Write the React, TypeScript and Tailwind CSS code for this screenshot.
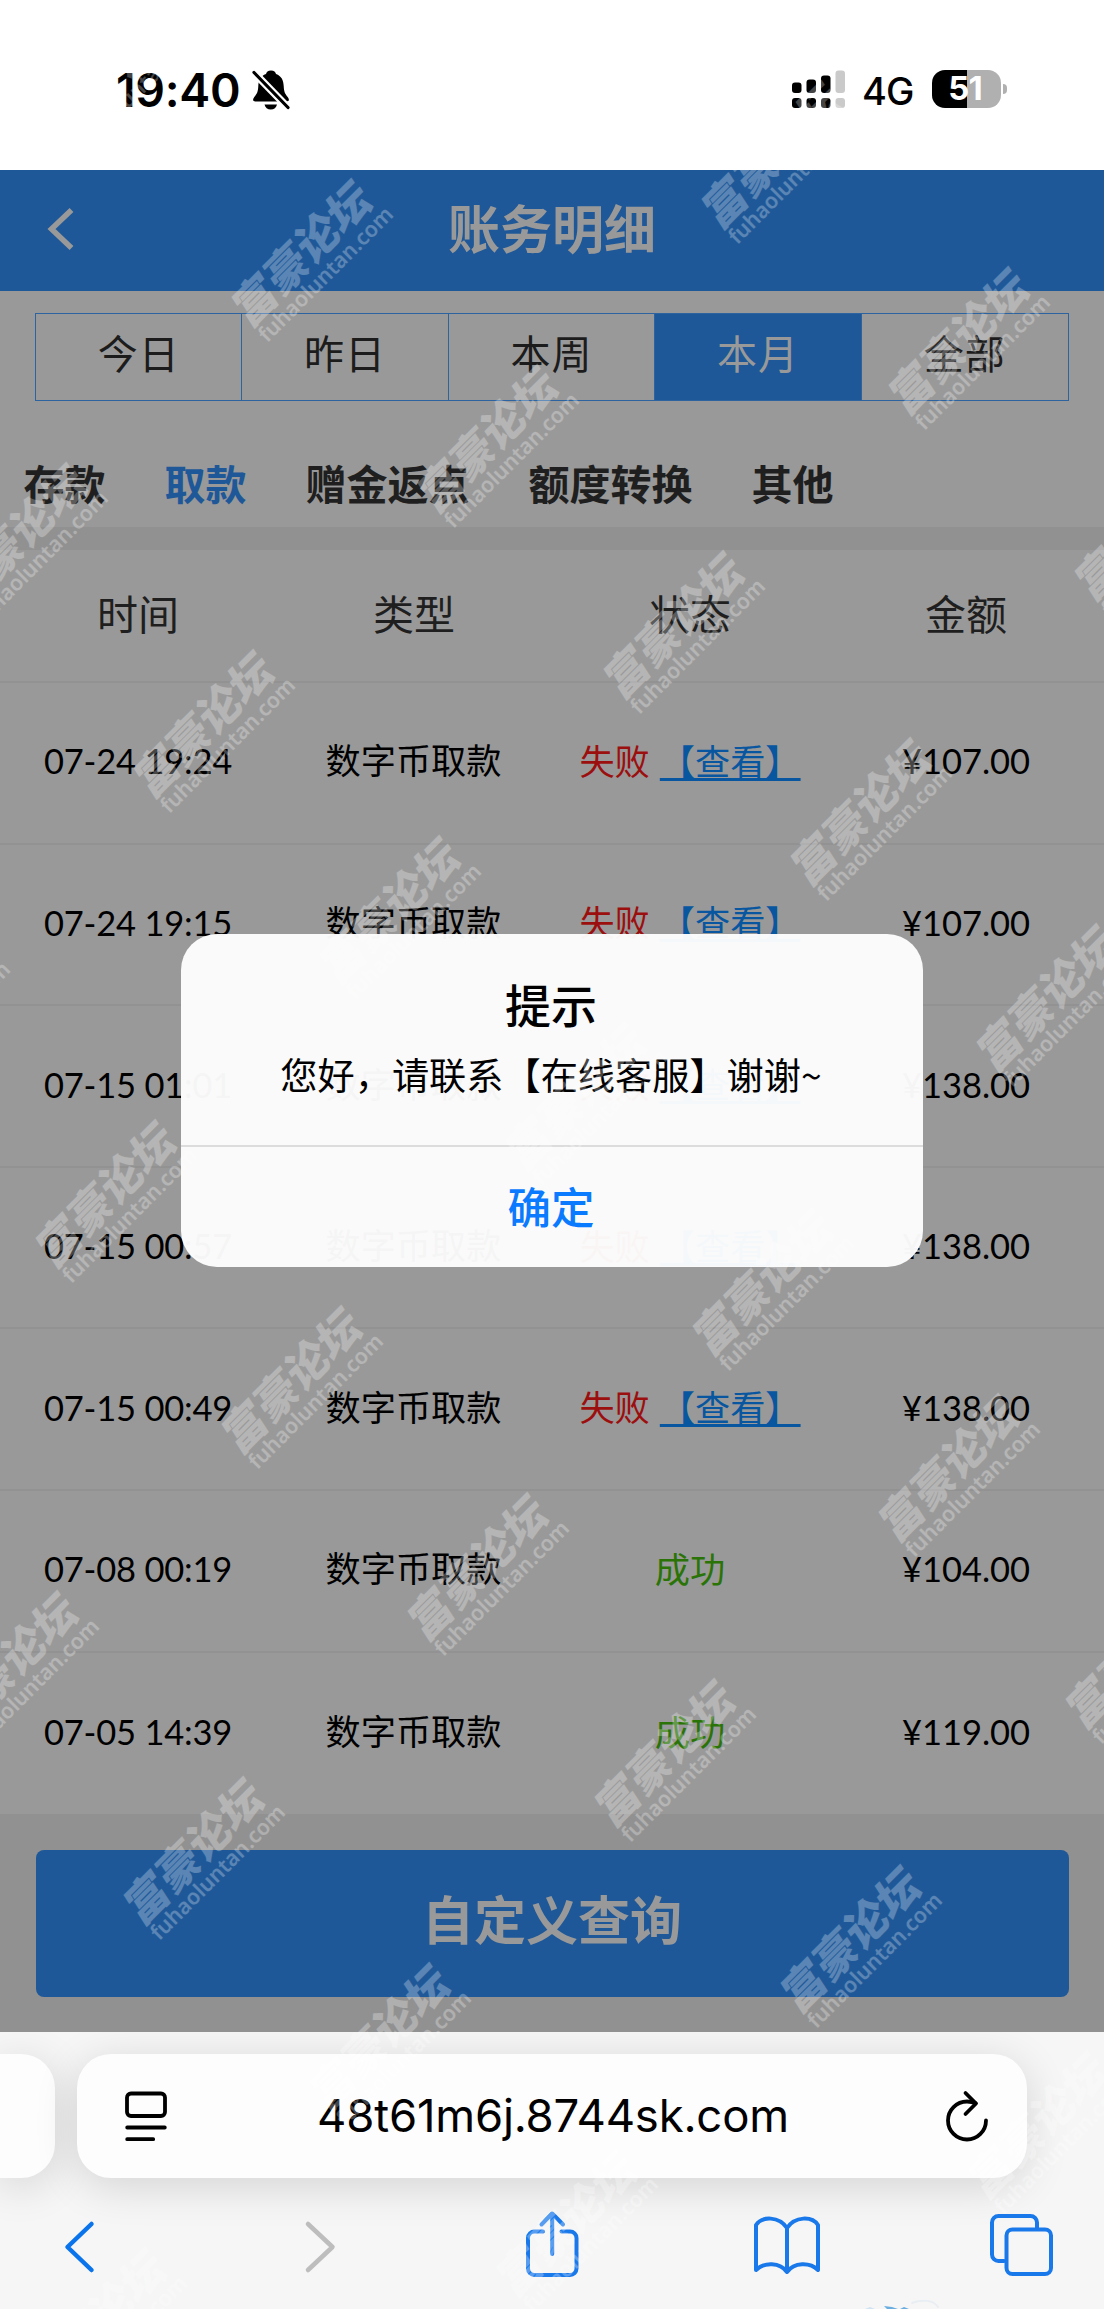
import React from "react";

const CJK = "font-['Noto_Sans_CJK_SC',sans-serif]";

const rows = [
  { time: "07-24 19:24", ok: false, amount: "¥107.00" },
  { time: "07-24 19:15", ok: false, amount: "¥107.00" },
  { time: "07-15 01:01", ok: false, amount: "¥138.00" },
  { time: "07-15 00:57", ok: false, amount: "¥138.00" },
  { time: "07-15 00:49", ok: false, amount: "¥138.00" },
  { time: "07-08 00:19", ok: true, amount: "¥104.00" },
  { time: "07-05 14:39", ok: true, amount: "¥119.00" },
];

function StatusBar() {
  return (
    <div className="flex h-[170px] items-start bg-white pt-[70px] font-[Inter,sans-serif] text-black">
      <div className="ml-[116px] h-[38px] w-[125px] text-[46.500px] leading-[40px] font-semibold tracking-[-0.3px] whitespace-nowrap">
        19:40
      </div>
      <svg className="ml-[11px] h-[40px] w-[38px]" viewBox="0 0 38 40">
        <path
          d="M19 0.5c-3 0-4.7 1.8-5 3.600C8.500 6 6.500 10.500 6.300 16c-.2 6-1.500 8-4 11C.5 29.400.600 31.500 3.500 31.500h31c2.900 0 3-2.100 1.200-4.500-2.500-3-3.800-5-4-11C31.500 10.500 29.500 6 24 4.100 23.700 2.300 22 .5 19 .5zM12.500 34.500h12.500c-.6 3-3 5-6.200 5s-5.700-2-6.300-5z"
          fill="#000"
        />
        <path d="M1.500 2l35 36" stroke="#fff" strokeWidth="7.500" />
        <path d="M2 2.500l34 35" stroke="#000" strokeWidth="3.200" strokeLinecap="round" />
      </svg>
      <svg className="ml-[502px] h-[38px] w-[54px]" viewBox="0 0 54 38">
        <g fill="#000">
          <rect x="0" y="12.500" width="9.500" height="10.500" rx="3" />
          <rect x="14.500" y="9.500" width="9.500" height="13.500" rx="3" />
          <rect x="29" y="5.500" width="9.500" height="17.500" rx="3" />
          <rect x="0" y="28" width="9.500" height="10" rx="3" />
          <rect x="14.500" y="28" width="9.500" height="10" rx="3" />
          <rect x="29" y="28" width="9.500" height="10" rx="3" />
        </g>
        <g fill="#cacaca">
          <rect x="43.500" y="0.500" width="9.500" height="22.500" rx="3" />
          <rect x="43.500" y="28" width="9.500" height="10" rx="3" />
        </g>
      </svg>
      <div className="ml-[16px] w-[52px] text-[38px] leading-[43px] font-medium tracking-[-1px]">4G</div>
      <div className="ml-[18px] flex h-[38px] w-[69px] items-center justify-center rounded-[13px] bg-[linear-gradient(90deg,#000_51%,#b0b0b0_51%)] pr-[3px] text-[33px] font-bold tracking-[-1px] text-white">
        51
      </div>
      <div className="mt-[14px] ml-[2px] h-[10px] w-[4px] rounded-r-full bg-[#b0b0b0]" />
    </div>
  );
}

function PageHeader() {
  return (
    <div className="relative flex h-[121px] items-center justify-center bg-[#1e5898] pb-[8px]">
      <svg className="absolute top-[37px] left-[47px] h-[44px] w-[28px]" viewBox="0 0 28 44" fill="none">
        <path d="M24.500 3L4.500 22l20 19" stroke="#999" strokeWidth="5.500" />
      </svg>
      <h1 className="text-[52px] leading-[60px] font-bold text-[#999]">账务明细</h1>
    </div>
  );
}

function RangeTabs() {
  const items = ["今日", "昨日", "本周", "本月", "全部"];
  return (
    <div className="mx-[35px] mt-[22px] grid h-[88px] grid-cols-5 border border-[#2d64a0]">
      {items.map((t, i) => (
        <div
          key={t}
          className={
            "flex items-center justify-center pb-[10px] text-[40px] tracking-[1px] " +
            (i === 3 ? "bg-[#1e5898] text-[#999]" : "text-[#1c1c1c]") +
            (i < 4 ? " border-r border-[#2d64a0]" : "")
          }
        >
          {t}
        </div>
      ))}
    </div>
  );
}

function TypeTabs() {
  const items = ["存款", "取款", "赠金返点", "额度转换", "其他"];
  return (
    <div className="flex h-[126px] items-center gap-[59px] pt-[35px] pl-[23.500px] text-[41px] leading-[50px] font-bold text-[#1f1f1f]">
      {items.map((t, i) => (
        <span key={t} className={i === 1 ? "text-[#1e5898]" : ""}>
          {t}
        </span>
      ))}
    </div>
  );
}

function RecordTable() {
  return (
    <div>
      <div className="grid h-[133px] grid-cols-4 items-center border-b-2 border-[#929292] pb-[5px] text-center text-[41px] text-[#1f1f1f]">
        <span>时间</span>
        <span>类型</span>
        <span>状态</span>
        <span>金额</span>
      </div>
      {rows.map((r, i) => (
        <div
          key={r.time}
          className={
            "grid h-[161.600px] grid-cols-4 items-center pb-[3px] text-center text-[35.200px] whitespace-nowrap text-black" +
            (i < rows.length - 1 ? " border-b-2 border-[#929292]" : "")
          }
        >
          <span className="font-[Lato,sans-serif] text-[34.500px] tracking-[-0.2px]">{r.time}</span>
          <span className="pr-[1px] pb-[3px]">数字币取款</span>
          {r.ok ? (
            <span className="pb-[1px] text-[#2a7306]">成功</span>
          ) : (
            <span className="flex items-center justify-center gap-[10px] pb-[2px] text-[#9c0f0f]">
              失败
              <a className="text-[#07569f] underline decoration-[3px] underline-offset-[3px] [text-decoration-skip-ink:none]">
                【查看】
              </a>
            </span>
          )}
          <span className="font-[Lato,sans-serif] text-[34.500px] tracking-[0px]">{r.amount}</span>
        </div>
      ))}
    </div>
  );
}

function Dialog() {
  return (
    <div className="absolute top-[934px] left-[181px] flex h-[333px] w-[742px] flex-col rounded-[36px] bg-[#fdfdfd]/97 text-center text-black">
      <div className="flex h-[213px] flex-col items-center border-b-2 border-[#dcdcdc] pt-[39px]">
        <div className="pr-[2px] text-[46px] leading-[60px] font-medium">提示</div>
        <div className="mt-[14px] pr-[2px] text-[37.200px] leading-[54px] whitespace-nowrap">您好，请联系【在线客服】谢谢~</div>
      </div>
      <div className="flex flex-1 items-center justify-center pr-[2px] pb-[3px] text-[43.500px] font-medium text-[#0a7aff]">确定</div>
    </div>
  );
}

function BrowserBar() {
  return (
    <div className="h-[277px] overflow-hidden bg-[#f6f6f6] pt-[22px]">
      <div className="flex gap-[22px]">
        <div className="h-[124px] w-[55px] rounded-r-[34px] bg-[#fdfdfd] shadow-[0_8px_44px_rgba(0,0,0,0.14)]" />
        <div className="flex h-[124px] w-[950px] items-center justify-between rounded-[34px] bg-[#fdfdfd] pr-[37px] pl-[47px] shadow-[0_8px_44px_rgba(0,0,0,0.14)]">
          <svg className="h-[52px] w-[44px]" viewBox="0 0 44 52" fill="none" stroke="#000" strokeWidth="3.800" strokeLinecap="round">
            <rect x="3" y="3.500" width="38" height="22.500" rx="4" />
            <path d="M3.200 37.500h37.600M3.200 49.200h26" />
          </svg>
          <span className="pr-[6px] font-[Inter,sans-serif] text-[45.500px] tracking-[-0.2px] text-black">48t61m6j.8744sk.com</span>
          <svg className="h-[52px] w-[46px]" viewBox="0 0 46 52" fill="none" stroke="#000" strokeWidth="3.800" strokeLinecap="round" strokeLinejoin="round">
            <path d="M42 30.500A19 19 0 1 1 23 11.500c3 0 6 .5 8.500 1.700" />
            <path d="M21.500 3L32 13.500 21.500 24" />
          </svg>
        </div>
      </div>
      <div className="h-[131px] pt-[23px]">
        <svg className="h-[108px] w-[1104px]" viewBox="0 0 1104 108" fill="none" strokeWidth="4" strokeLinecap="round" strokeLinejoin="round">
          <path d="M91.500 23L67.500 46l24 23" stroke="#0a74ec" strokeWidth="4.500" />
          <path d="M308 23l24.500 23L308 69" stroke="#bdbdbd" strokeWidth="4.500" />
          <g stroke="#1a79ea">
            <path d="M543 30.500h-8.500a6.500 6.500 0 0 0-6.500 6.500v30.500a6.500 6.500 0 0 0 6.500 6.500h35.500a6.500 6.500 0 0 0 6.500-6.500V37a6.500 6.500 0 0 0-6.500-6.500h-8.500M552.200 53V13.500M541.500 23.500L552.200 12.500 563 23.500" />
            <path d="M787 27c-8-12-25-12-31-3v45c8-8 24-8 31 2 7-10 23-10 31-2V24c-6-9-23-9-31 3zM787 27v44" />
            <rect x="1006.500" y="28.500" width="44.500" height="44.500" rx="6" />
            <path d="M1004 60h-5.500a6.500 6.500 0 0 1-6.500-6.500V21.500a6.500 6.500 0 0 1 6.500-6.500h32a6.500 6.500 0 0 1 6.500 6.500V27" />
          </g>
          <path d="M884 105l8 1 6 2h-11zM900 108l4-2 5 2z" fill="#6aaee0" />
          <path d="M865 108l5-2 5 2" fill="#cfe3f3" />
          <path d="M912 102c10-4 22-3 26 4" stroke="#e8eef3" strokeWidth="2" />
        </svg>
      </div>
    </div>
  );
}

// Diagonal lattice of translucent marks laid over the whole screen.
function Watermarks() {
  const marks: { x: number; y: number }[] = [];
  for (let i = -6; i < 16; i++) {
    for (let j = -6; j < 7; j++) {
      const x = 308.5 + i * 186.4 + j * 470.8;
      const y = 259 + i * 186.2 - j * 98.2;
      if (x > -90 && x < 1194 && y > 20 && y < 2390) marks.push({ x, y });
    }
  }
  return (
    <div className="pointer-events-none absolute inset-0 overflow-hidden">
      {marks.map((m) => (
        <div
          key={m.x + "-" + m.y}
          className="absolute flex h-[70px] w-[184px] -translate-x-1/2 -translate-y-1/2 -rotate-45 flex-col items-center whitespace-nowrap text-white/27"
          style={{ left: m.x, top: m.y }}
        >
          <span className="-skew-x-12 text-[44px] leading-[46px] font-black">富豪论坛</span>
          <span className="ml-[2px] font-['Noto_Sans',sans-serif] text-[21.500px] leading-[22px] font-semibold">fuhaoluntan.com</span>
        </div>
      ))}
    </div>
  );
}

export default function App() {
  return (
    <div className={"relative h-[2309px] w-[1104px] overflow-hidden bg-[#999] " + CJK}>
      <StatusBar />
      <PageHeader />
      <RangeTabs />
      <TypeTabs />
      <div className="h-[23px] bg-[#919191]" />
      <RecordTable />
      <div className="h-[218px] bg-[#919191] px-[35.500px] pt-[36px]">
        <div className="flex h-[147px] items-center justify-center rounded-[8px] bg-[#1e5898] pb-[11px] text-[52px] font-bold text-[#999]">
          自定义查询
        </div>
      </div>
      <BrowserBar />
      <Dialog />
      <Watermarks />
    </div>
  );
}
